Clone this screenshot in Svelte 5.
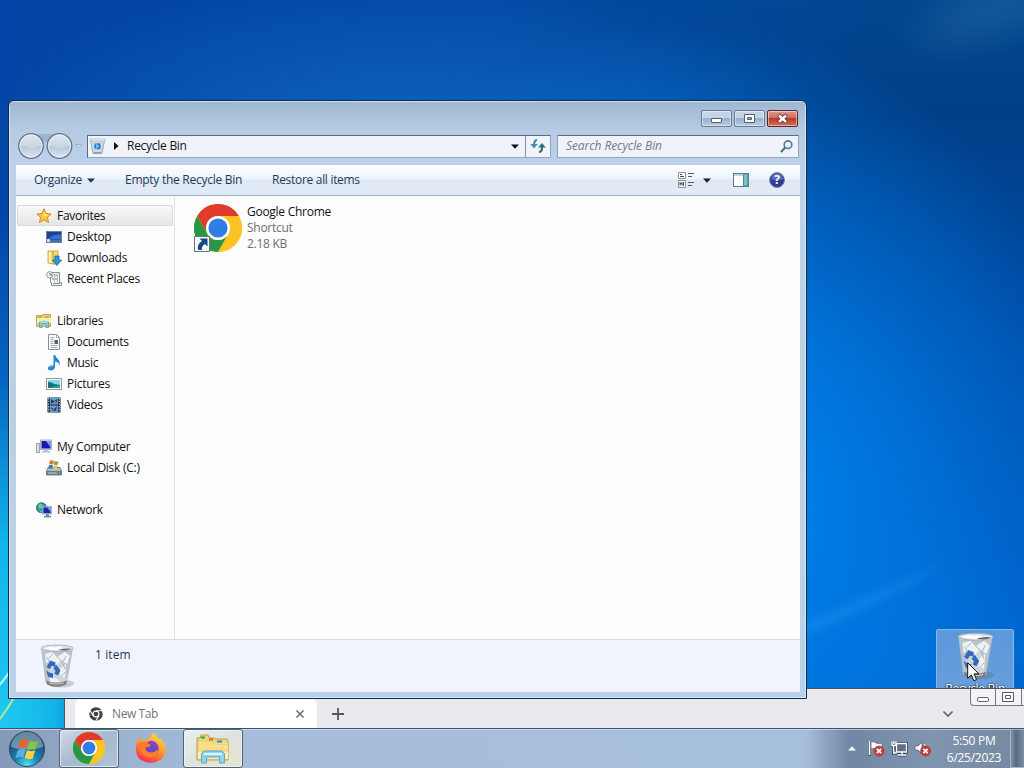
<script>
  const groups = [
    [
      { icon: 'star', label: 'Favorites', root: true, selected: true },
      { icon: 'desktop', label: 'Desktop' },
      { icon: 'downloads', label: 'Downloads' },
      { icon: 'recent', label: 'Recent Places' },
    ],
    [
      { icon: 'libraries', label: 'Libraries', root: true },
      { icon: 'document', label: 'Documents' },
      { icon: 'music', label: 'Music' },
      { icon: 'picture', label: 'Pictures' },
      { icon: 'video', label: 'Videos' },
    ],
    [
      { icon: 'computer', label: 'My Computer', root: true },
      { icon: 'disk', label: 'Local Disk (C:)' },
    ],
    [{ icon: 'network', label: 'Network', root: true }],
  ];

  let query = $state('');
</script>

{#snippet chrome(size)}
  <svg width={size} height={size} viewBox="0 0 48 48">
    <circle cx="24" cy="24" r="24" fill="#fcc934" />
    <path d="M3.2 12A24 24 0 0 1 44.8 12H24A12 12 0 0 0 13.6 30Z" fill="#e03a2d" />
    <path d="M3.2 12A24 24 0 0 0 24 48L34.4 30A12 12 0 0 1 13.6 30Z" fill="#2a9745" />
    <path d="M24 48A24 24 0 0 0 44.8 12H24A12 12 0 0 1 34.4 30Z" fill="#fbc423" />
    <circle cx="24" cy="24" r="12" fill="#fff" />
    <circle cx="24" cy="24" r="9.6" fill="#2f7de6" />
  </svg>
{/snippet}

{#snippet bin(w, h)}
  <svg width={w} height={h} viewBox="0 0 36 44">
    <ellipse cx="22" cy="39.5" rx="13" ry="4" fill="#54636b" opacity=".28" />
    <path d="M2.5 4L7 39Q17 44.5 27 40L33.5 4Z" fill="#ccd5da" />
    <path d="M3 7L7 37L11 39L9 20L15 12L25 18L26 39L29 28L33 7Z" fill="#b9c5cd" />
    <path d="M6 10l7-2 5 5 8-5 5 4-3 8-6-4-5 6-6-5-4 2zM21 25l6-5-1 14-5-2zM10 33l7 1 4 4-9 0z" fill="#eef2f4" />
    <path d="M18 13l5 4 3 8M8 13l3 6M22 33l4-5M14 10l-4 4M27 12l-3 6" stroke="#9ba8b0" stroke-width=".8" fill="none" />
    <path d="M7 36.5Q17 41 28 36.5L27 40.5Q17 45 8 40.5Z" fill="#7d7c75" />
    <path d="M10 39q7 2.5 15 0" stroke="#d0d2cf" fill="none" />
    <path d="M2.5 4L7 39M33.5 4L27.5 39" stroke="#aab6bd" stroke-width=".8" />
    <ellipse cx="18" cy="4.2" rx="16" ry="3.2" fill="#dbe2e6" stroke="#98a4aa" stroke-width=".7" />
    <path d="M5 4.5q7-3 11-1l5-1 4 2 6-1q-10 5-26 1z" fill="#fff" />
    <path d="M19 5.8q8-2.2 13-1-4 3-13 1z" fill="#5d6668" />
    <path d="M7.5 23l4-6.5 5 2-.5 4-3.3-.8-1.9 3.3zM17 20.500l4.500 6-2.700 5-3.300-1.700 1-3-2-2.300zM7 26.500l3 2 4 1v4.500l-4.700-1z" fill="#3469c0" />
  </svg>
{/snippet}

{#snippet icon(name)}
  <svg class="ico" width="16" height="16" viewBox="0 0 16 16">
    {#if name === 'star'}
      <path d="M8 .8l2.1 4.7 5.1.5-3.8 3.4 1.1 5.1L8 11.8l-4.5 2.7 1.1-5.1L.8 6l5.1-.5z" fill="#ffc13b" stroke="#d98a20" />
      <path d="M8 3l1.3 3.4 3.4.3-4.7 2z" fill="#fff0a8" />
    {:else if name === 'desktop'}
      <rect x=".5" y="2.5" width="15" height="11" fill="#1f57b7" stroke="#6e839b" />
      <path d="M1 10Q7 4 15 5V3H1z" fill="#1b428b" />
      <path d="M3 10Q8 5 15 6v4z" fill="#3674c9" />
      <path d="M1 11h14v2H1z" fill="#4b70a2" />
      <path d="M1 10h3v3H1z" fill="#b8e0ef" />
    {:else if name === 'downloads'}
      <path d="M2 1h5l1 13-6-1zM7 1h5v13H7z" fill="#f3da77" stroke="#d1ab45" />
      <path d="M3 2h2v11H3z" fill="#fff0ae" />
      <path d="M9 6h4v4h2.5L11 15.5 6.5 10H9z" fill="#2896dd" stroke="#1561a1" stroke-width=".8" />
    {:else if name === 'recent'}
      <path d="M4.5 1.5h9v10h2v3h-10v-3h-1z" fill="#f4f4f2" stroke="#8b9291" />
      <path d="M8 4h4M8 6h1m2 0h1M6 8h6M8 10h1m2 0h1M7 12.5h7" stroke="#7d8787" />
      <circle cx="3.8" cy="3.8" r="3.2" fill="#edf3f2" stroke="#8e9b9a" />
      <path d="M4 2v2h2" stroke="#596b70" fill="none" />
    {:else if name === 'libraries'}
      <path d="M.5 2.5h5l1-1h8v12H.5z" fill="#eccf63" stroke="#c0aa55" />
      <path d="M1 5h14v5H1z" fill="#fff0a5" />
      <path d="M2 4h4m3 0h4" stroke="#6aab6d" />
      <path d="M3.5 14.5V9q4.5-2 9 0v5.5H10v-4H6v4z" fill="#7dcde6" stroke="#3c90b8" stroke-width=".7" />
      <path d="M4.5 9h7" stroke="#d9f7ff" />
    {:else if name === 'document'}
      <path d="M2.5.5h8l3 3v12h-11z" fill="#fafafa" stroke="#8b9092" />
      <path d="M10.5.5v3h3M4.5 3.5h4M4.5 5.5h3M4.5 7.5h3M4.5 9.5h3M4.5 11.5h7M4.5 13.5h7" fill="none" stroke="#a3abaf" />
      <path d="M8.5 6H12v4H8.5z" fill="#55606c" />
    {:else if name === 'music'}
      <path d="M7.5 0h1.6q.7 2.5 3 4.2 2.4 2.3 1 6.8.2-3.6-4-4.5V12q-.8 3.3-4.2 3.6-4-.5-2.9-3.3 1.8-2.8 5.5-1.9z" fill="#218bd1" />
      <path d="M3.2 12.5q.8-1.7 3-1.5" stroke="#8bd1f4" fill="none" />
    {:else if name === 'picture'}
      <rect x=".5" y="2.5" width="15" height="11" fill="#fff" stroke="#9299a0" />
      <rect x="2" y="4" width="12" height="8" fill="#8ad5e9" />
      <path d="M2 6q4 0 6 2l6 1v3H2z" fill="#176f84" />
      <path d="M6 11l8-2v3H4z" fill="#2aa384" />
    {:else if name === 'video'}
      <rect x="1.5" y=".5" width="13" height="15" fill="#17263d" />
      <path d="M4 1h8v6.5H4zM4 8.5h8V15H4z" fill="#5ba6e0" />
      <path d="M5 2l3 2 3-2v4L8 5 5 7zM5 10l3 2 3-3-1 5H6z" fill="#253a68" />
      <path d="M8 3l3 2-2 2zM5 13l3-2v3z" fill="#b06c50" />
      <path d="M2.7 1v14M13.3 1v14" stroke="#d5e2ec" stroke-width="1.1" stroke-dasharray="1.4 1.3" />
    {:else if name === 'computer'}
      <path d="M.5 4.5h3v9h-3z" fill="#dbe2e6" stroke="#858e94" stroke-width=".8" />
      <rect x="4.5" y="1" width="11" height="9.5" fill="#e0e6eb" stroke="#9aa4b3" stroke-width=".8" />
      <path d="M5.5 2h9v7.5h-9z" fill="#1b1bab" />
      <path d="M10 2h4.5v6z" fill="#829eff" />
      <path d="M8 10.5h4V12h2v1.5H6V12h2z" fill="#b6c2cd" />
    {:else if name === 'disk'}
      <path d="M2 7.5h12l1.5 3.5v4H.5v-4z" fill="#b0bdc4" stroke="#5e6b72" stroke-width=".8" />
      <path d="M1 11h14v4H1z" fill="#627c8b" />
      <path d="M2 13h9" stroke="#c9d3d8" />
      <path d="M12.5 13H14" stroke="#71dc6b" />
      <path d="M4 .5q2-.8 4 .2l-.8 3.8q-2-1-4-.2z" fill="#e8702a" />
      <path d="M8.600 1q1.800.8 3.800.2L11.600 5q-2 .6-3.800-.2z" fill="#76ad42" />
      <path d="M3 5q2-.8 4 .2L6.200 9q-2-1-4-.2z" fill="#4778b5" />
      <path d="M7.600 5.500q1.800.8 3.800.2l-.8 3.800q-2 .6-3.800-.2z" fill="#edc340" />
    {:else if name === 'network'}
      <circle cx="5.5" cy="5.8" r="5" fill="#248ec4" stroke="#2269a0" />
      <path d="M2 3q3-3 5 0L6 6 3 7zM3 8l3 1-1 2z" fill="#72d161" />
      <rect x="6.5" y="4.5" width="9" height="7.5" fill="#d9e4ec" stroke="#8d9bb0" stroke-width=".7" />
      <path d="M7.3 5.3h7.5v5.9H7.3z" fill="#1a25b5" />
      <path d="M11 5.300h3.800V10z" fill="#7ca4ff" />
      <path d="M10 12h3v2h2v1.500H8V14h2z" fill="#728ba5" />
    {/if}
  </svg>
{/snippet}

<main class="desktop">
  <svg class="wallpaper" viewBox="0 0 1024 768" preserveAspectRatio="none">
    <defs>
      <filter id="soft" x="-30%" y="-30%" width="160%" height="160%"><feGaussianBlur stdDeviation="4" /></filter>
      <filter id="haze" x="-50%" y="-50%" width="200%" height="200%"><feGaussianBlur stdDeviation="18" /></filter>
    </defs>
    <path d="M790 630Q860 600 950 560Q870 612 790 640Z" fill="#3fb0ff" opacity=".22" filter="url(#soft)" />
    <path d="M900 40L980 -20H1060V18L960 45Z" fill="#5fa3b8" opacity=".2" filter="url(#haze)" />
    <path d="M-4 688Q4 682 14 664" stroke="#b3f4ff" stroke-width="2.2" fill="none" />
    <path d="M-2 721Q6 712 16 694" stroke="#a9e69a" stroke-width="2.2" fill="none" />
  </svg>

  <div class="desk-icon">
    {@render bin(39, 48)}
    <span>Recycle Bin</span>
  </div>

  <section class="browser">
    <div class="tab">
      <svg width="14" height="14" viewBox="0 0 14 14">
        <circle cx="7" cy="7" r="5.1" fill="none" stroke="#3f4246" stroke-width="3.2" />
        <circle cx="7" cy="7" r="2.3" fill="#3f4246" />
        <path d="M7 3.7h6.5M4.1 8.6L.9 3.2M9.9 8.600L6.700 14" stroke="#fff" stroke-width="1.1" />
      </svg>
      <span>New Tab</span>
      <svg width="10" height="10" viewBox="0 0 10 10"><path d="M1.5 1.5l7 7m0-7l-7 7" stroke="#66696e" stroke-width="1.5" /></svg>
    </div>
    <svg class="plus" width="12" height="12" viewBox="0 0 12 12"><path d="M6 0v12M0 6h12" stroke="#56595e" stroke-width="1.8" /></svg>
    <svg class="chev" width="12" height="8" viewBox="0 0 12 8"><path d="M1.5 1.5L6 6l4.5-4.5" fill="none" stroke="#65686c" stroke-width="1.7" /></svg>
    <div class="browser-btns">
      <svg width="24" height="16" viewBox="0 0 24 16"><rect x="6.5" y="8.5" width="11" height="4" rx="1.5" fill="#fff" stroke="#63666b" /></svg>
      <svg width="25" height="16" viewBox="0 0 25 16"><path d="M6.5 3.5h11v9h-11zM9.5 6.5h5v3h-5z" fill="#fff" stroke="#55585d" /></svg>
      <span class="cut"></span>
    </div>
  </section>

  <section class="window">
    <div class="caption">
      <button class="cap" aria-label="Minimize">
        <svg width="29" height="15" viewBox="0 0 29 15"><rect x="9.5" y="7.5" width="10" height="4" rx=".5" fill="#fff" stroke="#535e6e" /></svg>
      </button>
      <button class="cap" aria-label="Maximize">
        <svg width="29" height="15" viewBox="0 0 29 15"><path fill-rule="evenodd" d="M9.5 3.5h10v8h-10zM12.5 6.5h4v2h-4z" fill="#fff" stroke="#535e6e" /></svg>
      </button>
      <button class="cap close" aria-label="Close">
        <svg width="29" height="15" viewBox="0 0 29 15">
          <path d="M10.5 4l8 7m0-7l-8 7" stroke="#5d3840" stroke-width="4" />
          <path d="M11 4.5l7 6.3m0-6.3l-7 6.3" stroke="#fff" stroke-width="2.4" />
        </svg>
      </button>
    </div>

    <div class="nav">
      <svg class="backfwd" width="66" height="30" viewBox="0 0 66 30">
        <defs>
          <linearGradient id="orb" x2="0" y2="1">
            <stop offset="0" stop-color="#dfe7f0" />
            <stop offset=".48" stop-color="#cbd7e4" />
            <stop offset=".54" stop-color="#b9c9da" />
            <stop offset="1" stop-color="#dbe7f2" />
          </linearGradient>
        </defs>
        <path d="M14 3h30v4q-14 8-30 0z" fill="#91a8c4" opacity=".7" />
        <circle cx="15" cy="15" r="12.3" fill="url(#orb)" stroke="#61758f" stroke-width="1.3" />
        <circle cx="43.5" cy="15" r="12.3" fill="url(#orb)" stroke="#61758f" stroke-width="1.3" />
        <circle cx="15" cy="15" r="11" fill="none" stroke="#edf5fb" opacity=".7" />
        <circle cx="43.5" cy="15" r="11" fill="none" stroke="#edf5fb" opacity=".7" />
        <path d="M11 16h9M39 16h9" stroke="#dce7f2" stroke-width="1.5" opacity=".5" />
        <path d="M59.5 13.5h7l-3.5 4z" fill="#c9d9ea" stroke="#91a6be" stroke-width=".7" />
      </svg>

      <div class="address">
        <svg class="smallbin" width="17" height="17" viewBox="0 0 17 17">
          <path d="M1.5 2.5h14l-2.5 13H4z" fill="#cfdbe6" stroke="#9aabb8" />
          <path d="M1 1h15v2H1z" fill="#eef3f6" stroke="#a3adb3" stroke-width=".6" />
          <path d="M5 5h7v6.5H5z" fill="#8bb9ee" />
          <circle cx="8.5" cy="8.2" r="2.3" fill="none" stroke="#246bc4" stroke-width="1.5" stroke-dasharray="3.5 1.2" />
          <path d="M5 14.5h7" stroke="#a39a86" />
        </svg>
        <svg class="crumb" width="5" height="8" viewBox="0 0 5 8"><path d="M0 0l4.5 4L0 8z" fill="#111" /></svg>
        <span class="path">Recycle Bin</span>
        <svg class="drop" width="8" height="5" viewBox="0 0 8 5"><path d="M0 .5h8L4 4.7z" fill="#111" /></svg>
        <div class="refresh">
          <svg width="16" height="14" viewBox="0 0 16 14">
            <path d="M7 1Q4 1 4 7" fill="none" stroke="#357faf" stroke-width="2" />
            <path d="M.2 5h7.6L4 9.5z" fill="#3f8fb9" />
            <path d="M9 13q3.5 0 3-6" fill="none" stroke="#2e6679" stroke-width="2" />
            <path d="M8.2 8.5L12 4l3.8 4.5z" fill="#2c6f85" />
          </svg>
        </div>
      </div>

      <div class="search">
        <input type="text" placeholder="Search Recycle Bin" bind:value={query} />
        <svg width="13" height="13" viewBox="0 0 13 13"><circle cx="8" cy="4.7" r="3.8" fill="#e8f4fc" stroke="#4c7da9" stroke-width="1.6" /><path d="M5.2 7.6L1 12" stroke="#4a7196" stroke-width="2.2" /></svg>
      </div>
    </div>

    <div class="toolbar">
      <span class="organize">Organize</span>
      <svg class="arrow" width="8" height="5" viewBox="0 0 8 5"><path d="M0 .5h8L4 4.7z" fill="#1e395b" /></svg>
      <span class="empty">Empty the Recycle Bin</span>
      <span class="restore">Restore all items</span>
      <div class="tools">
        <svg width="17" height="16" viewBox="0 0 17 16">
          <path d="M.5.5h7v6h-7zM.5 8.5h7v7h-7z" fill="#fff" stroke="#8d9395" />
          <path d="M2 2.5h2M2 4.5h4M2 13.5v-3l1 2 1-2v3M5.5 10v4" stroke="#464e54" fill="none" />
          <path d="M10 1.5h6M10 4.5h4M10 10.5h6M10 13.5h4" stroke="#555f69" />
        </svg>
        <svg class="viewdrop" width="8" height="5" viewBox="0 0 8 5"><path d="M0 .5h8L4 4.7z" fill="#17202b" /></svg>
        <svg class="pane" width="16" height="14" viewBox="0 0 16 14">
          <rect x=".5" y=".5" width="15" height="13" fill="#fff" stroke="#5d7790" />
          <path d="M1 2h9" stroke="#b9d6df" stroke-width="2" />
          <path d="M10.5 1H15v12h-4.5z" fill="#7dbfc6" stroke="#4a8b98" />
        </svg>
        <svg class="help" width="16" height="16" viewBox="0 0 16 16">
          <circle cx="8" cy="8" r="7.4" fill="#303c9c" stroke="#747e9e" />
          <path d="M2 7a6 6 0 0 1 12 0q-6 3-12 0z" fill="#6d7cce" opacity=".65" />
          <text x="8" y="12.3" text-anchor="middle">?</text>
        </svg>
      </div>
    </div>

    <div class="content">
      <nav class="sidebar">
        {#each groups as group}
          <ul>
            {#each group as item}
              <li class:root={item.root} class:selected={item.selected}>
                {@render icon(item.icon)}
                <span>{item.label}</span>
              </li>
            {/each}
          </ul>
        {/each}
      </nav>

      <div class="files">
        <div class="file">
          <div class="thumb">
            {@render chrome(48)}
            <svg class="shortcut" width="16" height="16" viewBox="0 0 16 16">
              <rect x=".5" y=".5" width="15" height="15" fill="#f5f8fb" stroke="#69747c" />
              <path d="M5.5 2.5h8v8L11 8Q7.5 9.500 7.800 14H4.500Q2 9 8 5z" fill="#164a86" />
            </svg>
          </div>
          <div class="meta">
            <span class="name">Google Chrome</span>
            <span>Shortcut</span>
            <span>2.18 KB</span>
          </div>
        </div>
      </div>
    </div>

    <footer class="details">
      {@render bin(36, 44)}
      <span>1 item</span>
    </footer>
  </section>

  <div class="taskbar">
    <svg class="start" width="38" height="38" viewBox="0 0 38 38">
      <defs>
        <radialGradient id="start" cx=".5" cy=".95" r=".85">
          <stop offset="0" stop-color="#4fe0f2" />
          <stop offset=".4" stop-color="#1c7fae" />
          <stop offset="1" stop-color="#1d4866" />
        </radialGradient>
      </defs>
      <circle cx="19" cy="19" r="17.5" fill="url(#start)" stroke="#294a65" />
      <path d="M3 17a16 15 0 0 1 32 0q-16 5-32 0z" fill="#d8e8f0" opacity=".4" />
      <path d="M12.5 10.5q4-2.600 8-.6l-2.400 8.300q-4-1.800-8 .8z" fill="#ea5f2b" />
      <path d="M21.700 10.700q4 2.200 8.200.2l-2.300 8q-4.200 2-8.200-.2z" fill="#8cc43f" />
      <path d="M9.700 20.200q4-2.600 8-.8l-2.300 8q-4-1.800-8 .8z" fill="#58aee6" />
      <path d="M19 20q4 2.200 8.200.2l-2.300 8q-4.200 2-8.200-.2z" fill="#fbd142" />
    </svg>
    <div class="task active">{@render chrome(32)}</div>
    <svg class="firefox" width="32" height="32" viewBox="0 0 32 32">
      <defs>
        <linearGradient id="fox" x1=".8" y1="0" x2=".3" y2="1">
          <stop offset="0" stop-color="#ffe14b" />
          <stop offset=".5" stop-color="#ff9629" />
          <stop offset="1" stop-color="#f52b55" />
        </linearGradient>
      </defs>
      <path d="M4.5 5q1 2 3.5 3.5l4-1Q16 5 18 .5q4 3 6 7l2-1q6 8 4.5 14Q27.500 30 16 31 4 30 1.500 22-.5 12 4.500 5z" fill="url(#fox)" />
      <circle cx="16" cy="17" r="7.5" fill="#6f45c6" />
      <path d="M3 13q4-4.500 9-3l4 3q-1.500 2.500-5.500 2.500 0 5 5.500 5 5 0 6.500-4 1.500 7-6 9Q6 25.500 3 13z" fill="#ff7b2e" />
      <path d="M12 11q3-4 8-1 5 3 3 9-2-5-6-5.500z" fill="#8a42c4" />
    </svg>
    <div class="task explorer">
      <svg width="34" height="30" viewBox="0 0 34 30">
        <path d="M1 4h3l1-3h7l1 3h5l1 1h12l1 3v18H1z" fill="#f2d77d" stroke="#bd9d4d" />
        <path d="M2 9h30v16H2z" fill="#ffedac" />
        <path d="M2 7h14l2 3h14v7H2z" fill="#f8df8b" stroke="#dfbd68" stroke-width=".6" />
        <path d="M5 3.5h4" stroke="#23a44b" stroke-width="2" />
        <path d="M13 5.5h4" stroke="#d76332" stroke-width="2" />
        <path d="M21 7.5h5" stroke="#368bce" stroke-width="2" />
        <path d="M5.5 29v-9q1-3 4-3h15q3 0 4 3v9h-5v-6h-13v6z" fill="#8fd3ec" stroke="#5ba9cf" />
        <path d="M8 20h18" stroke="#d9f6ff" stroke-width="2" />
      </svg>
    </div>

    <div class="tray">
      <svg class="up" width="8" height="5" viewBox="0 0 8 5"><path d="M0 4.5h8L4 .2z" fill="#fff" /></svg>
      <svg width="18" height="17" viewBox="0 0 18 17">
        <path d="M2.5 1v15" stroke="#4c5868" stroke-width="3" />
        <path d="M2.5 1v14" stroke="#fff" stroke-width="1.5" />
        <path d="M4 2q3-1 5 1 3 1 6 0v7q-3 1-6-1-2-1-5 0z" fill="#f6f8fa" stroke="#596575" stroke-width=".7" />
        <circle cx="12" cy="11" r="5" fill="#cf3834" stroke="#933" stroke-width=".6" />
        <path d="M9.8 8.8l4.4 4.4m0-4.4l-4.4 4.4" stroke="#fff" stroke-width="1.7" />
      </svg>
      <svg width="17" height="17" viewBox="0 0 17 17">
        <path d="M5.5 3.5h10V12h-10zM7 15h8M11 12v3M2.5 5v8h3M.9 2v3.5h4V2" fill="none" stroke="#303d4d" stroke-width="3" />
        <path d="M5.5 3.5h10V12h-10zM7 15h8M11 12v3M2.5 5v8h3M.9 1.5v4h4v-4M2.9 1v3" fill="#5d7188" stroke="#fff" stroke-width="1.3" />
      </svg>
      <svg width="18" height="17" viewBox="0 0 18 17">
        <path d="M1 6h3l4-4v12l-4-4H1z" fill="#fff" stroke="#56606d" stroke-width=".8" />
        <path d="M10 4q3 2 2 6" fill="none" stroke="#fff" />
        <circle cx="11.5" cy="11" r="5" fill="#cf3834" stroke="#933" stroke-width=".6" />
        <path d="M9.3 8.8l4.4 4.4m0-4.4l-4.4 4.4" stroke="#fff" stroke-width="1.7" />
      </svg>
      <div class="clock">
        <span>5:50 PM</span>
        <span>6/25/2023</span>
      </div>
      <span class="peek"></span>
    </div>
  </div>

  <svg class="cursor" width="13" height="20" viewBox="0 0 13 20"><path d="M.7.8v15.500l3.600-3.400 2.500 5.800 2.700-1.100L7 11.900h5z" fill="#fff" stroke="#111" /></svg>
</main>

<style>
  :global(body) {
    margin: 0;
    overflow: hidden;
  }

  .desktop {
    position: relative;
    width: 1024px;
    height: 768px;
    overflow: hidden;
    display: flex;
    flex-direction: column;
    justify-content: flex-end;
    font-family: "Open Sans", "Noto Sans", sans-serif;
    font-size: 12px;
    letter-spacing: -0.27px;
    color: #111;
    background:
      radial-gradient(ellipse 140px 560px at 0 768px, #22cdf0 0, #12b4ea 40%, rgba(8, 130, 220, 0.5) 70%, transparent 100%),
      radial-gradient(ellipse 420px 480px at 690px 500px, #0086ee 0, rgba(0, 128, 234, 0.9) 30%, transparent 100%),
      radial-gradient(ellipse 420px 150px at 400px 130px, rgba(18, 108, 196, 0.75), transparent),
      linear-gradient(90deg, #0345a6 0, #0349a4 50%, transparent 85%),
      linear-gradient(#00468f 0, #003f88 15%, #0049a0 38%, #0054b4 60%, #0062cc 85%);
  }

  svg { display: block; flex: none; }

  .wallpaper {
    position: absolute;
    inset: 0;
    width: 100%;
    height: 100%;
  }

  .desk-icon {
    position: absolute;
    left: 936px;
    top: 629px;
    width: 76px;
    height: 72px;
    display: flex;
    flex-direction: column;
    align-items: center;
    border: 1px solid #85b9ec;
    border-radius: 2px;
    background: linear-gradient(#5b98dc, #6c9fda);
    color: #fff;
    text-shadow: 0 1px 2px #000, 0 0 2px #123;
  }

  .desk-icon svg { margin-top: 2px; }
  .desk-icon span { line-height: 16px; margin-top: 1px; }

  /* windows */
  .browser {
    position: absolute;
    left: 64px;
    top: 688px;
    width: 973px;
    height: 40px;
    box-sizing: border-box;
    display: flex;
    align-items: flex-start;
    border: 1px solid #4f5661;
    border-bottom: 0;
    background: #e9eaed;
  }

  .tab {
    display: flex;
    align-items: center;
    width: 242px;
    height: 31px;
    margin: 9px 0 0 10px;
    padding: 0 12px 0 14px;
    box-sizing: border-box;
    border-radius: 8px 8px 0 0;
    background: #fff;
    color: #727478;
    letter-spacing: -0.4px;
  }

  .tab span { flex: 1; margin-left: 9px; }
  .plus { margin: 19px 0 0 15px; }
  .chev { margin: 21px 16px 0 auto; }

  .browser-btns {
    display: flex;
    height: 16px;
    border: 1px solid #74777c;
    border-top: 0;
    border-radius: 0 0 0 4px;
    background: #f3f4f5;
  }

  .browser-btns svg + svg { border-left: 1px solid #74777c; }
  .cut { width: 13px; border-left: 1px solid #74777c; }

  .window {
    position: absolute;
    left: 8px;
    top: 100px;
    width: 799px;
    height: 599px;
    box-sizing: border-box;
    display: flex;
    flex-direction: column;
    padding: 0 6px 6px;
    border: 1px solid #0e2c44;
    border-radius: 6px 6px 1px 1px;
    background: linear-gradient(#9eb6d2 0, #b6cae2 28px, #bdd2ea 65px, #bbd0e2 300px, #b9d1ea 100%);
    box-shadow: inset 0 0 0 1px rgba(222, 240, 252, 0.75);
  }

  .caption {
    display: flex;
    justify-content: flex-end;
    gap: 2px;
    height: 21px;
    padding: 9px 2px 0 0;
  }

  .cap {
    width: 31px;
    height: 17px;
    padding: 0;
    box-sizing: border-box;
    border: 1px solid #677b95;
    border-radius: 2px;
    background: linear-gradient(#c6d5e6 0 48%, #9bb0c9 50%, #b9cce2);
    box-shadow: inset 0 0 0 1px rgba(240, 248, 255, 0.5);
  }

  .close {
    border-color: #5a2530;
    background: linear-gradient(#df9b8e 0, #cf6b58 48%, #b93a25 50%, #d27156);
  }

  .nav {
    display: flex;
    align-items: center;
    height: 30px;
    margin: 0 1px 4px 1px;
  }

  .backfwd { margin-right: 5px; }

  .address, .search {
    display: flex;
    align-items: center;
    height: 23px;
    box-sizing: border-box;
    border: 1px solid #8fa5c0;
    border-top-color: #526b88;
    background: #f0f4fa;
  }

  .address { width: 464px; border-left-color: #526b88; }
  .smallbin { margin-left: 1px; }
  .crumb { margin-left: 8px; }
  .path { flex: 1; margin-left: 8px; line-height: 16px; padding-bottom: 1px; }
  .drop { margin-right: 6px; }

  .refresh {
    display: flex;
    align-items: center;
    justify-content: center;
    width: 24px;
    height: 100%;
    border-left: 1px solid #7d91aa;
  }

  .search {
    flex: 1;
    margin-left: 6px;
    padding: 0 5px 0 8px;
  }

  .search input {
    flex: 1;
    min-width: 0;
    padding: 0 0 1px;
    border: 0;
    outline: 0;
    background: none;
    font: italic 12px "Open Sans", "Noto Sans", sans-serif;
    letter-spacing: -0.09px;
  }

  .search input::placeholder { color: #737b86; opacity: 1; }

  .toolbar {
    display: flex;
    align-items: center;
    height: 31px;
    margin: 0 0 0 1px;
    padding-left: 18px;
    box-sizing: border-box;
    color: #1e395b;
    border-bottom: 1px solid #a0b2cb;
    background: linear-gradient(#fcfeff 0, #edf4fc 46%, #dfe8f5 50%, #e2ecf8 90%, #d8e4f1);
  }

  .toolbar span { padding-bottom: 1px; }
  .arrow { margin: 0 30px 0 4px; }
  .organize { margin-right: 1px; }
  .empty { margin-right: 30px; }
  .restore { letter-spacing: -0.3px; }

  .tools {
    display: flex;
    align-items: center;
    margin-left: auto;
    padding-right: 15px;
  }

  .viewdrop { margin-left: 8px; }
  .pane { margin-left: 22px; }
  .help { margin-left: 20px; }

  .help text {
    font: bold 12px "Open Sans", sans-serif;
    fill: #fff;
  }

  .content {
    display: flex;
    flex: 1;
    min-height: 0;
    margin-left: 1px;
    background: #fdfdfe;
  }

  .sidebar {
    width: 159px;
    padding-top: 9px;
    box-sizing: border-box;
    border-right: 1px solid #dae4ee;
  }

  ul {
    margin: 0 0 21px;
    padding: 0;
    list-style: none;
  }

  li {
    display: flex;
    align-items: center;
    height: 21px;
    margin-left: 1px;
    padding-left: 29px;
    box-sizing: border-box;
  }

  li .ico { margin-right: 5px; }
  li.root { padding-left: 19px; }

  li.selected {
    padding-left: 18px;
    margin-right: 1px;
    border: 1px solid #d9d9d9;
    border-radius: 2px;
    background: linear-gradient(#f8f8f8, #e6e6e7);
  }

  .files { flex: 1; padding: 8px 0 0 19px; }
  .file { display: flex; gap: 5px; }
  .thumb { position: relative; width: 48px; height: 48px; }
  .shortcut { position: absolute; left: 0; bottom: 0; }

  .meta {
    display: flex;
    flex-direction: column;
    line-height: 16px;
    color: #6d6d6d;
  }

  .name { color: #111; }

  .details {
    display: flex;
    height: 53px;
    margin-left: 1px;
    padding: 4px 0 0 23px;
    box-sizing: border-box;
    border-top: 1px solid #d3deea;
    background: #f1f4fd;
    color: #1e395b;
  }

  .details span {
    margin-left: 20px;
    line-height: 22px;
    letter-spacing: 0.1px;
  }

  /* taskbar */
  .taskbar {
    position: relative;
    display: flex;
    align-items: center;
    height: 40px;
    box-sizing: border-box;
    border-top: 1px solid #3d526c;
    background: linear-gradient(90deg, #8499b8 0, #9db4d1 130px, #a6bedb 250px, #a6bfdd 805px, #7087a5 850px, #8095ae 930px, #74889f 1024px);
    box-shadow: inset 0 1px rgba(230, 240, 250, 0.6);
  }

  .start { margin-left: 8px; }

  .task {
    display: flex;
    align-items: center;
    justify-content: center;
    width: 60px;
    height: 39px;
    box-sizing: border-box;
    border: 1px solid #50637b;
    border-radius: 3px;
    box-shadow: inset 0 0 0 1px rgba(239, 246, 253, 0.7);
  }

  .active {
    margin-left: 13px;
    padding-bottom: 2px;
    background: linear-gradient(145deg, #d0dce8, #a6b9ce 50%, #b1c3d5);
  }

  .firefox { margin: 0 16px 2px 16px; }

  .explorer {
    background: linear-gradient(145deg, #eaf0ed, #dde3dc 50%, #e8e5cb);
  }

  .tray {
    display: flex;
    align-items: center;
    height: 100%;
    gap: 6px;
    margin-left: auto;
  }

  .up { margin-right: 5px; }

  .clock {
    display: flex;
    flex-direction: column;
    align-items: center;
    width: 66px;
    margin-left: 3px;
    line-height: 17px;
    color: #fff;
  }

  .peek {
    width: 13px;
    height: 37px;
    margin-left: -3px;
    border: 1px solid #a5b5c6;
    border-right: 0;
    background: linear-gradient(90deg, #8292a6, #566a82 40%, #7d8fa4);
  }

  .cursor {
    position: absolute;
    left: 967px;
    top: 662px;
  }
</style>
